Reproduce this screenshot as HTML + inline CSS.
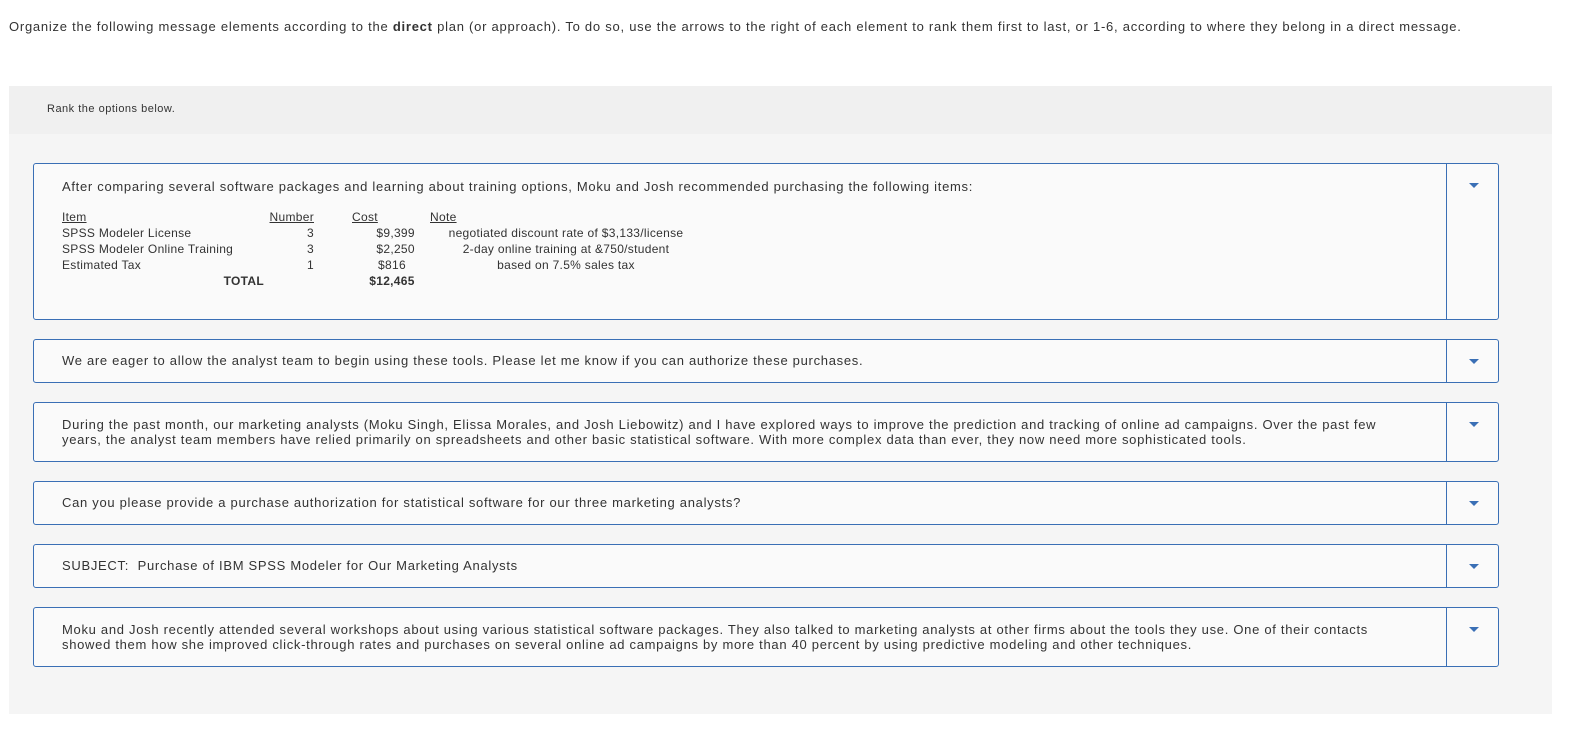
<!DOCTYPE html>
<html><head><style>
body{margin:0;background:#fff;font-family:"Liberation Sans",sans-serif;color:#333;width:1588px;height:737px;position:relative;overflow:hidden}
.ins{position:absolute;left:9px;top:19px;font-size:13px;white-space:nowrap;letter-spacing:0.75px}
.panel{position:absolute;left:9px;top:86px;width:1543px;height:628px;background:#f5f5f5}
.hdr{position:absolute;left:0;top:0;width:1543px;height:48px;background:#f0f0f0}
.hdr span{position:absolute;left:38px;top:17px;font-size:11px;letter-spacing:0.5px}
.box{position:absolute;left:33px;width:1466px;border:1px solid #3a6fb5;border-radius:3px;background:#fafafa;box-sizing:border-box}
.box .t{position:absolute;left:28px;font-size:13px;line-height:15px;width:1350px;letter-spacing:0.7px}
.box .d{position:absolute;left:1412px;top:0;bottom:0;border-left:1px solid #3a6fb5}
.box .a{position:absolute;left:1435px;width:0;height:0;border-left:5px solid transparent;border-right:5px solid transparent;border-top:5px solid #3a6fb5}
.tb{position:absolute;font-size:12px;line-height:16px;white-space:nowrap;letter-spacing:0.3px}
u{text-decoration:underline}
</style></head><body>
<div class="ins">Organize the following message elements according to the <b>direct</b> plan (or approach). To do so, use the arrows to the right of each element to rank them first to last, or 1-6, according to where they belong in a direct message.</div>
<div class="panel"><div class="hdr"><span>Rank the options below.</span></div></div>

<div class="box" style="top:163px;height:157px">
<div class="t" style="top:15px">After comparing several software packages and learning about training options, Moku and Josh recommended purchasing the following items:</div>
<div class="tb" style="left:28px;top:45px"><u>Item</u><br>SPSS Modeler License<br>SPSS Modeler Online Training<br>Estimated Tax</div>
<div class="tb" style="left:180px;top:109px;width:50px;text-align:right"><b>TOTAL</b></div>
<div class="tb" style="left:220px;top:45px;width:60px;text-align:right"><u>Number</u><br>3<br>3<br>1</div>
<div class="tb" style="left:318px;top:45px"><u>Cost</u></div>
<div class="tb" style="left:323px;top:61px;width:70px;text-align:center">&nbsp;&nbsp;$9,399<br>&nbsp;&nbsp;$2,250<br>$816<br><b>$12,465</b></div>
<div class="tb" style="left:396px;top:45px"><u>Note</u></div>
<div class="tb" style="left:394px;top:61px;width:276px;text-align:center">negotiated discount rate of $3,133/license<br>2-day online training at &amp;750/student<br>based on 7.5% sales tax</div>
<div class="d"></div><div class="a" style="top:19px"></div></div>

<div class="box" style="top:339px;height:44px"><div class="t" style="top:13px">We are eager to allow the analyst team to begin using these tools. Please let me know if you can authorize these purchases.</div><div class="d"></div><div class="a" style="top:19px"></div></div>

<div class="box" style="top:402px;height:60px"><div class="t" style="top:14px">During the past month, our marketing analysts (Moku Singh, Elissa Morales, and Josh Liebowitz) and I have explored ways to improve the prediction and tracking of online ad campaigns. Over the past few years, the analyst team members have relied primarily on spreadsheets and other basic statistical software. With more complex data than ever, they now need more sophisticated tools.</div><div class="d"></div><div class="a" style="top:19px"></div></div>

<div class="box" style="top:481px;height:44px"><div class="t" style="top:13px">Can you please provide a purchase authorization for statistical software for our three marketing analysts?</div><div class="d"></div><div class="a" style="top:19px"></div></div>

<div class="box" style="top:544px;height:44px"><div class="t" style="top:13px">SUBJECT:&nbsp; Purchase of IBM SPSS Modeler for Our Marketing Analysts</div><div class="d"></div><div class="a" style="top:19px"></div></div>

<div class="box" style="top:607px;height:60px"><div class="t" style="top:14px">Moku and Josh recently attended several workshops about using various statistical software packages. They also talked to marketing analysts at other firms about the tools they use. One of their contacts showed them how she improved click-through rates and purchases on several online ad campaigns by more than 40 percent by using predictive modeling and other techniques.</div><div class="d"></div><div class="a" style="top:19px"></div></div>
</body></html>
